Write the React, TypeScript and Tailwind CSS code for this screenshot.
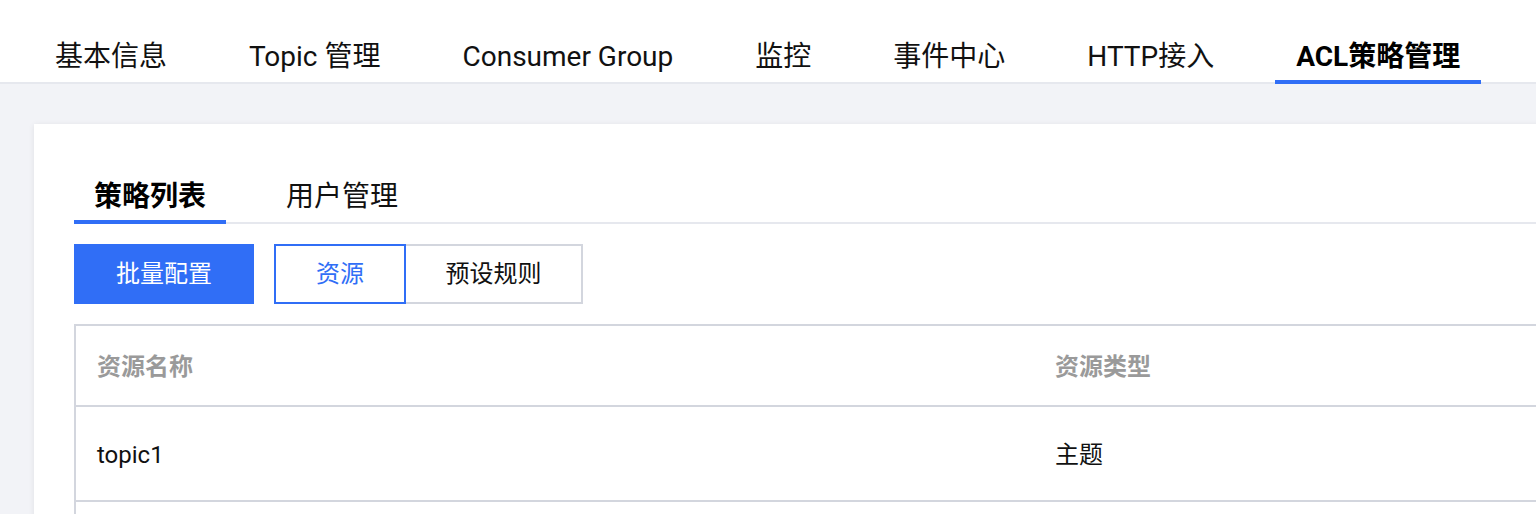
import React from "react";

const font = { fontFamily: 'Roboto, "Noto Sans CJK SC", sans-serif' };

const navTabs = ["基本信息", "Topic 管理", "Consumer Group", "监控", "事件中心", "HTTP接入", "ACL策略管理"];

const App = () => {
  const active = "ACL策略管理";

  return (
    <div className="h-[514px] w-[1536px] overflow-hidden bg-[#f2f3f7]" style={font}>
      {/* top navigation */}
      <div className="flex h-[84px] items-end gap-[40px] border-b-2 border-[#e6e8ee] bg-white pl-[34px]">
        {navTabs.map((tab) => (
          <div
            key={tab}
            className={`-mb-[2px] flex h-[54px] items-center border-b-4 px-[21px] pt-[3px] text-[28px] leading-none ${
              tab === active ? "border-[#306ef6] font-bold text-black" : "border-transparent text-[#111]"
            }`}
          >
            {tab}
          </div>
        ))}
      </div>

      {/* content card */}
      <div className="pl-[34px] pt-[40px]">
        <div className="h-[600px] w-[1560px] bg-white pl-[40px] pt-[46px] shadow-[0_1px_6px_rgba(0,0,0,0.08)]">
          {/* sub tabs */}
          <div className="flex gap-[40px] border-b-2 border-[#e6e8ee]">
            <div className="-mb-[2px] flex h-[54px] items-center border-b-4 border-[#306ef6] px-[20px] pt-[3px] text-[28px] font-bold leading-none text-black">
              策略列表
            </div>
            <div className="-mb-[2px] flex h-[54px] items-center border-b-4 border-transparent px-[20px] pt-[3px] text-[28px] leading-none text-[#111]">
              用户管理
            </div>
          </div>

          {/* actions */}
          <div className="mt-[20px] flex h-[60px] items-stretch gap-[20px]">
            <button className="flex w-[180px] items-center justify-center bg-[#306ef6] text-[24px] text-white">
              批量配置
            </button>
            <div className="flex">
              <button className="flex w-[132px] items-center justify-center border-2 border-[#306ef6] text-[24px] text-[#306ef6]">
                资源
              </button>
              <button className="flex w-[177px] items-center justify-center border-2 border-l-0 border-[#d3d6de] text-[24px] text-[#111]">
                预设规则
              </button>
            </div>
          </div>

          {/* table */}
          <div className="mt-[20px] border-2 border-r-0 border-b-0 border-[#d3d6de]">
            <div className="grid h-[81px] grid-cols-[957px_1fr] items-center border-b-2 border-[#d3d6de] pt-[3px] text-[24px] font-semibold text-[#9a9a9a]">
              <div className="pl-[21px]">资源名称</div>
              <div className="pl-[22px]">资源类型</div>
            </div>
            <div className="grid h-[95px] grid-cols-[957px_1fr] items-center border-b-2 border-[#d3d6de] pt-[3px] text-[24px] text-[#111]">
              <div className="pl-[21px]">topic1</div>
              <div className="pl-[22px]">主题</div>
            </div>
            <div className="grid h-[95px] grid-cols-[957px_1fr] items-center border-b-2 border-[#d3d6de] text-[24px] text-[#111]">
              <div className="pl-[21px]"></div>
              <div className="pl-[22px]"></div>
            </div>
          </div>
        </div>
      </div>
    </div>
  );
};

export default App;
